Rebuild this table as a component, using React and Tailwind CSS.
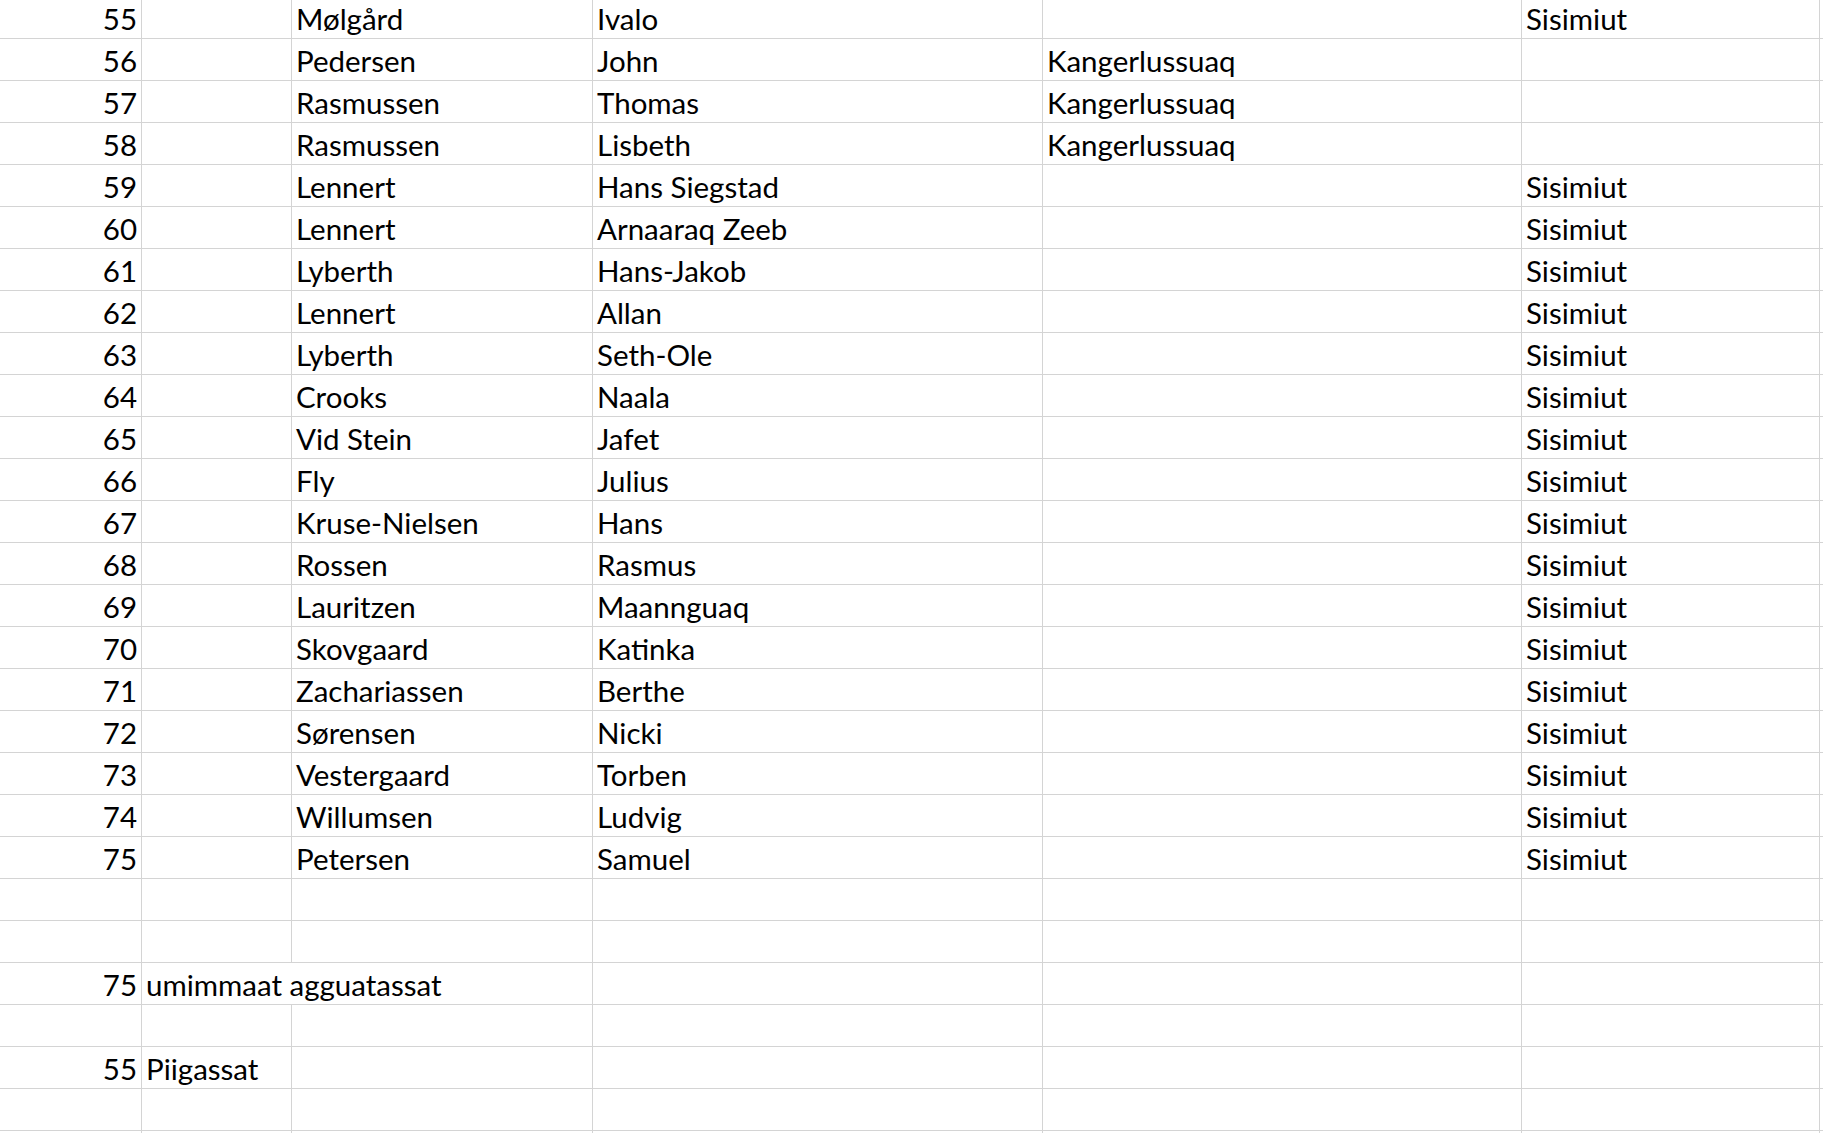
import React from "react";

// [row no, col B, last name, first name, Kangerlussuaq, Sisimiut, spill]
const rows = [
  ["55", "", "Mølgård", "Ivalo", "", "Sisimiut"],
  ["56", "", "Pedersen", "John", "Kangerlussuaq", ""],
  ["57", "", "Rasmussen", "Thomas", "Kangerlussuaq", ""],
  ["58", "", "Rasmussen", "Lisbeth", "Kangerlussuaq", ""],
  ["59", "", "Lennert", "Hans Siegstad", "", "Sisimiut"],
  ["60", "", "Lennert", "Arnaaraq Zeeb", "", "Sisimiut"],
  ["61", "", "Lyberth", "Hans-Jakob", "", "Sisimiut"],
  ["62", "", "Lennert", "Allan", "", "Sisimiut"],
  ["63", "", "Lyberth", "Seth-Ole", "", "Sisimiut"],
  ["64", "", "Crooks", "Naala", "", "Sisimiut"],
  ["65", "", "Vid Stein", "Jafet", "", "Sisimiut"],
  ["66", "", "Fly", "Julius", "", "Sisimiut"],
  ["67", "", "Kruse-Nielsen", "Hans", "", "Sisimiut"],
  ["68", "", "Rossen", "Rasmus", "", "Sisimiut"],
  ["69", "", "Lauritzen", "Maannguaq", "", "Sisimiut"],
  ["70", "", "Skovgaard", "Katinka", "", "Sisimiut"],
  ["71", "", "Zachariassen", "Berthe", "", "Sisimiut"],
  ["72", "", "Sørensen", "Nicki", "", "Sisimiut"],
  ["73", "", "Vestergaard", "Torben", "", "Sisimiut"],
  ["74", "", "Willumsen", "Ludvig", "", "Sisimiut"],
  ["75", "", "Petersen", "Samuel", "", "Sisimiut"],
  ["", "", "", "", "", ""],
  ["", "", "", "", "", ""],
  ["75", "umimmaat agguatassat", "", "", "", "", true],
  ["", "", "", "", "", ""],
  ["55", "Piigassat", "", "", "", ""],
  ["", "", "", "", "", ""],
  ["", "", "", "", "", ""],
];

const cell = "h-full flex items-end pb-[5px] border-r border-[#d4d4d4] whitespace-nowrap shrink-0";

function Row({ data, first }) {
  const [num, colB, last, name, kanger, sisi, spill] = data;
  return (
    <div
      className={`flex border-b border-[#d4d4d4] ${first ? "h-[39px]" : "h-[42px]"}`}
    >
      <div className={`${cell} w-[142px] justify-end pr-[4px]`}>{num}</div>
      <div
        className={`h-full flex items-end pb-[5px] whitespace-nowrap w-[150px] shrink-0 pl-[4px] ${
          spill ? "relative z-10" : "border-r border-[#d4d4d4]"
        }`}
      >
        {colB}
      </div>
      <div className={`${cell} w-[301px] pl-[4px]`}>{last}</div>
      <div className={`${cell} w-[450px] pl-[4px]`}>{name}</div>
      <div className={`${cell} w-[479px] pl-[4px]`}>{kanger}</div>
      <div className={`${cell} w-[298px] pl-[4px]`}>{sisi}</div>
      <div className="flex-1"></div>
    </div>
  );
}

export default function App() {
  return (
    <div
      className="w-full h-[1133px] overflow-hidden bg-white text-black text-[29.5px] leading-none"
      style={{ fontFamily: "Lato, 'Open Sans', sans-serif" }}
    >
      {rows.map((r, i) => (
        <Row key={i} data={r} first={i === 0} />
      ))}
    </div>
  );
}
